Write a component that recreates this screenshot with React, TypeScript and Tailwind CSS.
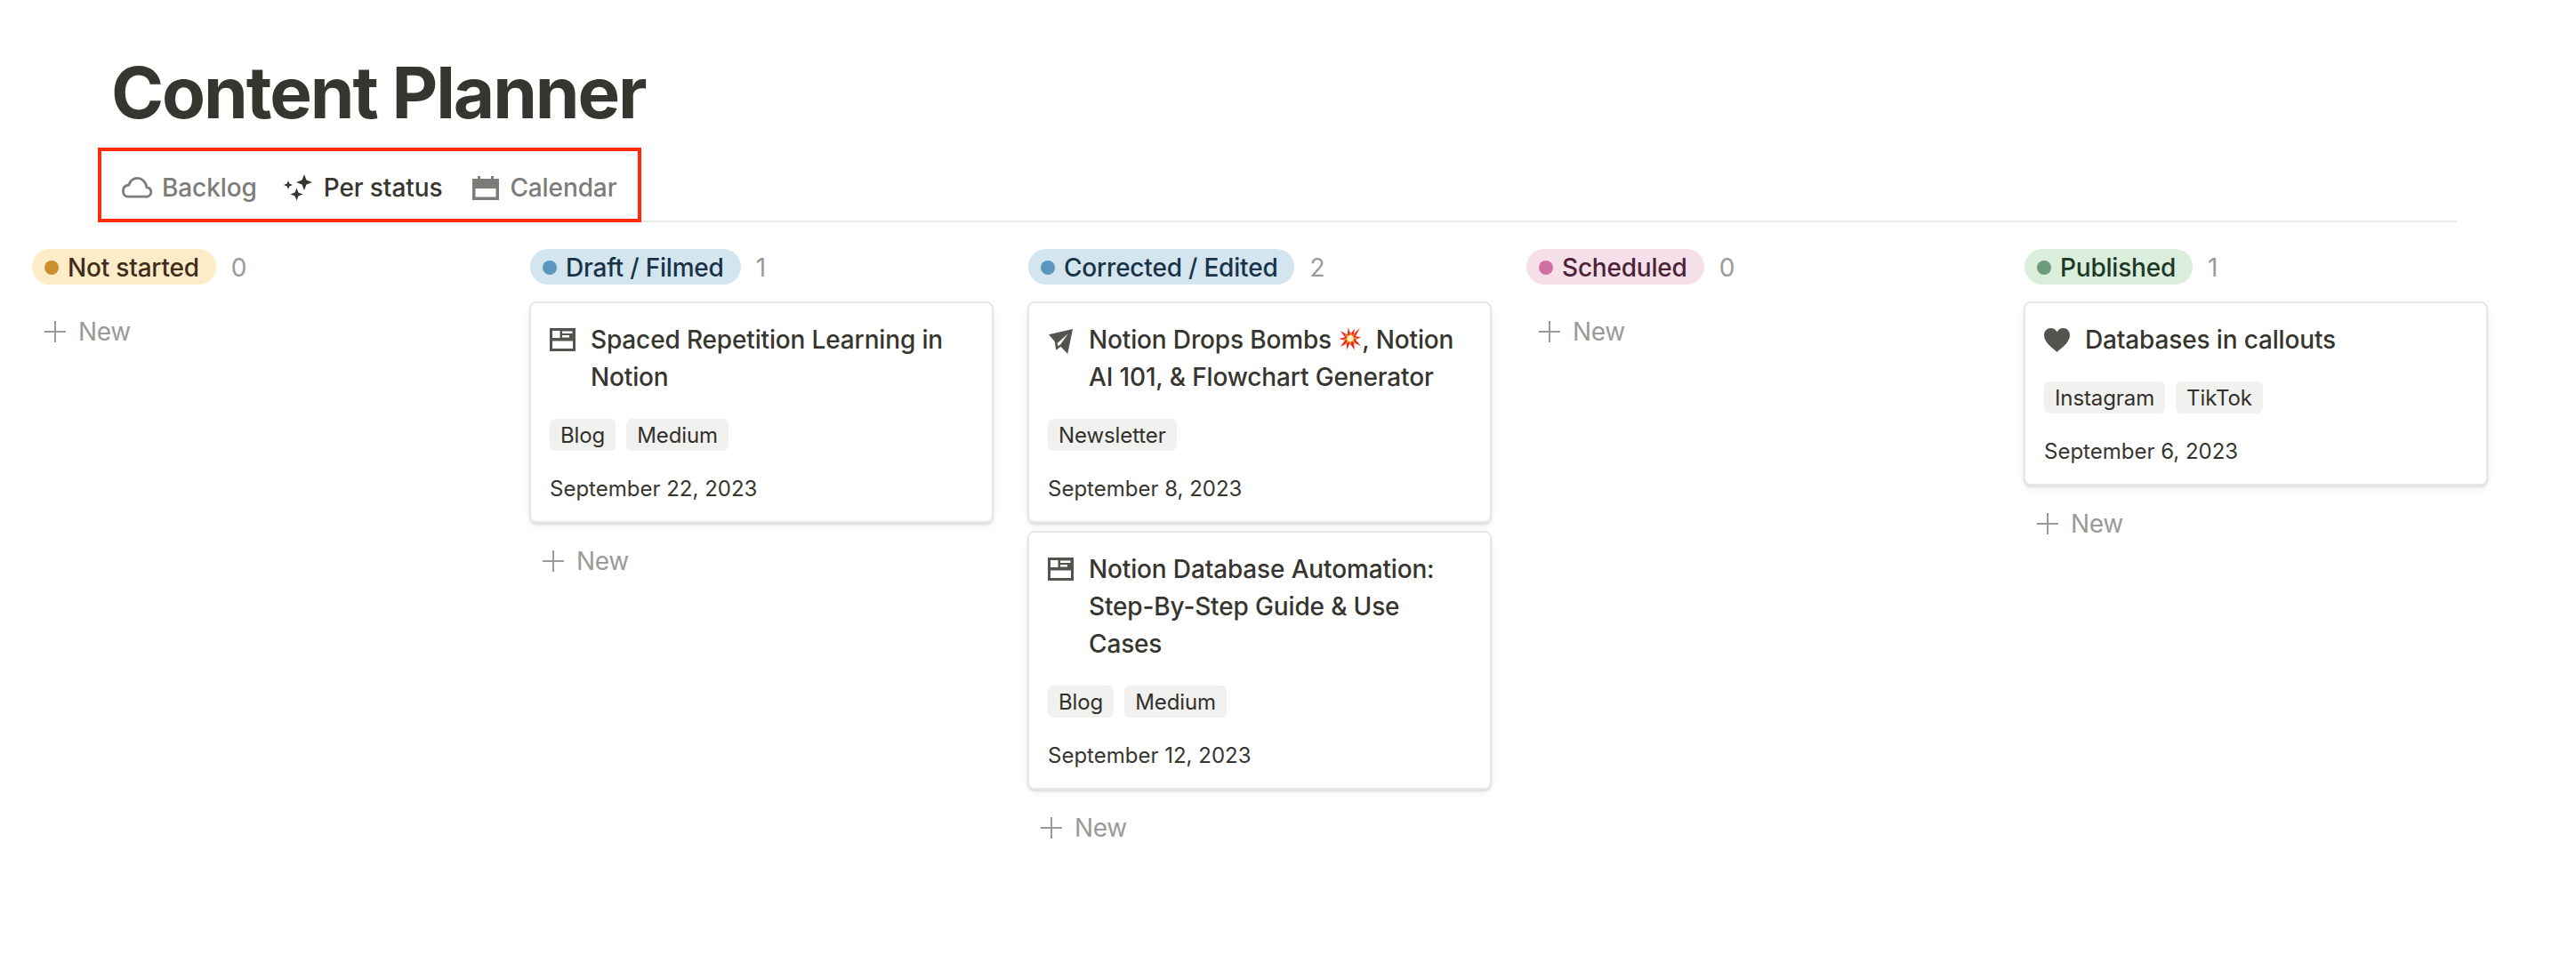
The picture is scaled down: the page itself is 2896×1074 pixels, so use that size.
import React from 'react';

interface CardData {
  icon: 'page' | 'plane' | 'heart';
  title: React.ReactNode;
  tags: string[];
  date: string;
}

interface ColumnData {
  name: string;
  count: number;
  pill: string;
  dot: string;
  cards: CardData[];
}

const Burst = () => (
  <svg viewBox="0 0 28 28" className="inline-block w-[25px] h-[28px] align-[-3px] mx-[1px]">
    <polygon
      fill="#f0241c"
      points="27,0 19,8 20,1 15,8 12,0 11,9 2,4 8,12 0,14 8,16 2,24 10,20 10,28 14,20 20,28 19,19 28,23 21,15 28,12 21,11"
    />
    <polygon fill="#ffa02e" points="22,5 17,10 15,5 13,11 7,8 11,13 5,15 11,16 8,21 13,18 15,23 16,17 22,20 18,15 24,13 18,12" />
    <circle cx="14.5" cy="13.5" r="4" fill="#fff6c4" />
  </svg>
);

const PageIcon = () => (
  <svg viewBox="0 0 29 26" className="w-[29px] h-[26px] shrink-0" fill="#55534e">
    <path
      fillRule="evenodd"
      d="M0 0h29v26H0zM3 3v8h8.500V3zM14 3.500v2.500h11.500V3.500zM14 8v2.500h8V8zM3 14.500V23h23v-8.500z"
    />
  </svg>
);

const PlaneIcon = () => (
  <svg viewBox="0 0 30 30" className="w-[29px] h-[30px] shrink-0" fill="#55534e">
    <path
      fillRule="evenodd"
      d="M29 0.500 1 7l7 8 1.500 10 5.500-4 8 8.500zM23.500 6 11 17l.8 3.500 3-2.200z"
    />
  </svg>
);

const HeartIcon = () => (
  <svg viewBox="0 0 29 27" className="w-[29px] h-[27px] shrink-0" fill="#55534e">
    <path d="M14.500 27C12 24 0 17 0 8 0 3.300 3.300 0 7.500 0c3 0 5.500 1.600 7 4.200C16 1.600 18.500 0 21.500 0 25.700 0 29 3.300 29 8c0 9-12 16-14.500 19z" />
  </svg>
);

const CloudIcon = () => (
  <svg viewBox="0 0 34 24" className="w-[34px] h-[24px]" fill="none" stroke="#7d7c78" strokeWidth="2.800">
    <path d="M7 22.200H27A5.300 5.300 0 0 0 28 11.600C27 5.500 22.500 1.400 17.500 1.400 13 1.400 9.400 4.200 7.800 9 4 9.500 1.400 12 1.400 15.700 1.400 19.500 3.500 22.200 7 22.200Z" />
  </svg>
);

// four point star used by the sparkle tab icon
const star = (cx: number, cy: number, r: number) => {
  const k = r * 0.28;
  return `M${cx} ${cy - r}L${cx + k} ${cy - k}L${cx + r} ${cy}L${cx + k} ${cy + k}L${cx} ${cy + r}L${cx - k} ${cy + k}L${cx - r} ${cy}L${cx - k} ${cy - k}Z`;
};

const SparkleIcon = () => (
  <svg viewBox="0 0 32 30" className="w-[32px] h-[30px]" fill="#37352f">
    <path d={star(23, 9, 9)} />
    <path d={star(5, 12, 5)} />
    <path d={star(14.5, 22.5, 7)} />
  </svg>
);

const CalendarIcon = () => (
  <svg viewBox="0 0 30 27" className="w-[30px] h-[27px]" fill="#7d7c78">
    <path
      fillRule="evenodd"
      d="M0 3h6V0h3v3h12V0h3v3h6v24H0zM3.500 14v9.500h23V14z"
    />
  </svg>
);

const PlusIcon = () => (
  <svg viewBox="0 0 24 24" className="w-[24px] h-[24px]" fill="none" stroke="#9b9a97" strokeWidth="2">
    <path d="M12 0v24M0 12h24" />
  </svg>
);

const columns: ColumnData[] = [
  { name: 'Not started', count: 0, pill: 'bg-[#fdecc8] text-[#402c1b]', dot: 'bg-[#cb912f]', cards: [] },
  {
    name: 'Draft / Filmed',
    count: 1,
    pill: 'bg-[#d3e5ef] text-[#183347]',
    dot: 'bg-[#5b97bd]',
    cards: [
      { icon: 'page', title: 'Spaced Repetition Learning in Notion', tags: ['Blog', 'Medium'], date: 'September 22, 2023' },
    ],
  },
  {
    name: 'Corrected / Edited',
    count: 2,
    pill: 'bg-[#d3e5ef] text-[#183347]',
    dot: 'bg-[#5b97bd]',
    cards: [
      {
        icon: 'plane',
        title: (
          <>
            Notion Drops Bombs <Burst />, Notion AI 101, &amp; Flowchart Generator
          </>
        ),
        tags: ['Newsletter'],
        date: 'September 8, 2023',
      },
      {
        icon: 'page',
        title: 'Notion Database Automation: Step-By-Step Guide & Use Cases',
        tags: ['Blog', 'Medium'],
        date: 'September 12, 2023',
      },
    ],
  },
  { name: 'Scheduled', count: 0, pill: 'bg-[#f5e0e9] text-[#4c2337]', dot: 'bg-[#d06fa2]', cards: [] },
  {
    name: 'Published',
    count: 1,
    pill: 'bg-[#dbeddb] text-[#1c3829]',
    dot: 'bg-[#6c9b7d]',
    cards: [{ icon: 'heart', title: 'Databases in callouts', tags: ['Instagram', 'TikTok'], date: 'September 6, 2023' }],
  },
];

const Card = ({ card }: { card: CardData }) => (
  <div className="rounded-[8px] border-2 border-[#e8e8e6] bg-white pl-[21px] pr-[21px] pt-[20px] pb-[18px] shadow-[0_2px_2px_rgba(15,15,15,0.1),0_4px_8px_rgba(15,15,15,0.06)]">
    <div className="flex gap-[17px]">
      <div className="pt-[8px]">
        {card.icon === 'page' && <PageIcon />}
        {card.icon === 'plane' && <PlaneIcon />}
        {card.icon === 'heart' && <HeartIcon />}
      </div>
      <div className="text-[28px] leading-[42px] font-medium tracking-[-0.15px] text-[#37352f]">{card.title}</div>
    </div>
    <div className="mt-[26px] flex gap-[12px]">
      {card.tags.map((tag) => (
        <span key={tag} className="h-[36px] rounded-[6px] bg-[#f1f1ef] px-[12px] text-[24px] leading-[37px] tracking-[-0.1px] text-[#32302c]">
          {tag}
        </span>
      ))}
    </div>
    <div className="mt-[25px] h-[36px] text-[24px] leading-[36px] text-[#37352f]">{card.date}</div>
  </div>
);

const Column = ({ column }: { column: ColumnData }) => (
  <div className="w-[522px] shrink-0">
    <div className="flex items-center h-[40px] pl-px">
      <div className={`flex items-center h-[40px] rounded-full pl-[14px] pr-[19px] pt-px gap-[10px] text-[28px] font-medium tracking-[-0.2px] ${column.pill}`}>
        <span className={`w-[16px] h-[16px] rounded-full ${column.dot}`} />
        {column.name}
      </div>
      <span className="ml-[17px] pt-px text-[28px] text-[#9b9a97]">{column.count}</span>
    </div>
    <div className="mt-[19px] flex flex-col gap-[9px]">
      {column.cards.map((card, i) => (
        <Card key={i} card={card} />
      ))}
      <div className="flex items-center h-[68px] pl-[15px] gap-[14px] text-[28px] tracking-[-0.3px] text-[#9b9a97]">
        <PlusIcon />
        New
      </div>
    </div>
  </div>
);

export default function App() {
  return (
    <div className="w-[2896px] h-[1074px] bg-white overflow-hidden [font-family:Inter,sans-serif]">
      <div className="ml-[124px] w-[2638px] pt-[56px]">
        <h1 className="pl-px text-[80px] leading-[96px] font-bold tracking-[-2.1px] text-[#37352f]">Content Planner</h1>
        <div className="relative mt-[24px] h-[74px] flex items-center pl-[13px] pb-[2px] border-b-2 border-[#e9e9e7] text-[28px] font-medium tracking-[-0.1px] text-[#7d7c78]">
          <div className="flex items-center gap-[11px]">
            <CloudIcon />
            <span>Backlog</span>
          </div>
          <div className="ml-[30px] flex items-center gap-[13px] text-[#37352f]">
            <SparkleIcon />
            <span>Per status</span>
          </div>
          <div className="ml-[34px] flex items-center gap-[12px]">
            <CalendarIcon />
            <span>Calendar</span>
          </div>
          <div className="absolute left-[-14px] top-[-10px] w-[611px] h-[84px] border-4 border-[#ff2a0a]" />
        </div>
      </div>
      <div className="mt-[30px] ml-[35px] flex gap-[38px]">
        {columns.map((column) => (
          <Column key={column.name} column={column} />
        ))}
      </div>
    </div>
  );
}
